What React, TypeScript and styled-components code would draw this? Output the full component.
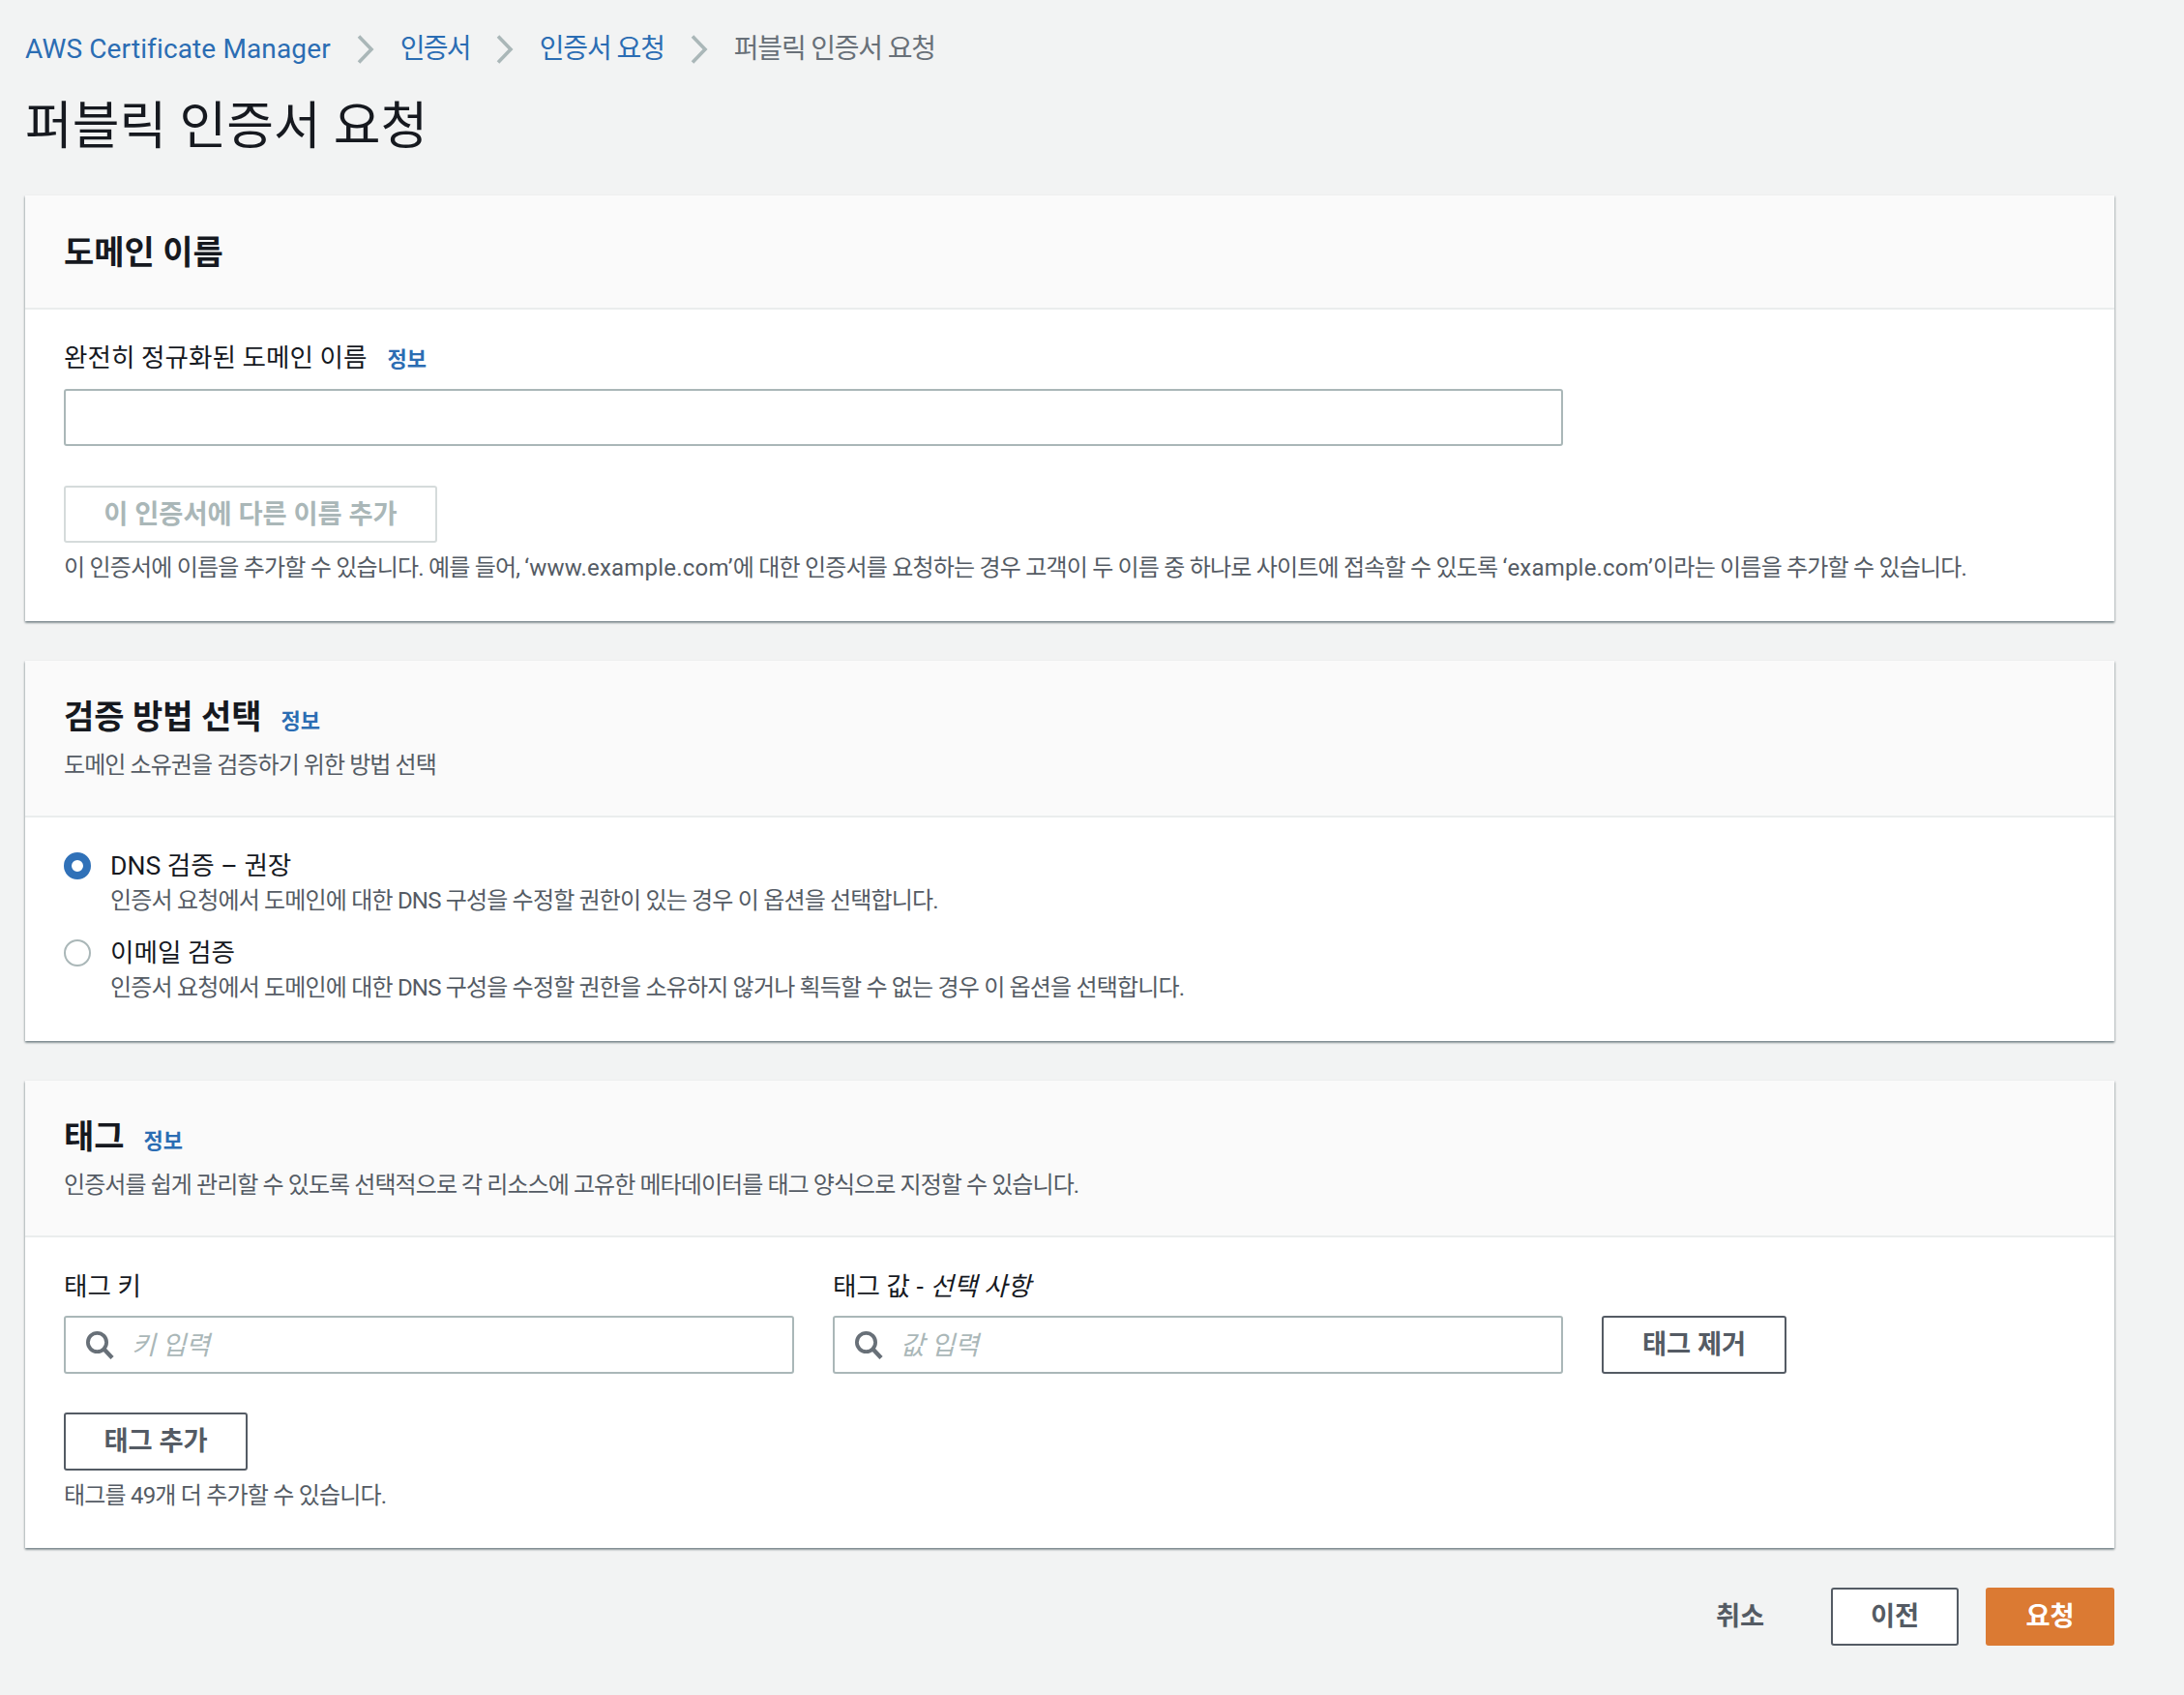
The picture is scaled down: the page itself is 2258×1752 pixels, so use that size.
import React from "react";
import styled, { createGlobalStyle } from "styled-components";

const FONT = `Roboto, "Noto Sans CJK KR", "Noto Sans", sans-serif`;

const Global = createGlobalStyle`
  html, body { margin: 0; padding: 0; background: #f2f3f3; }
  body { font-family: ${FONT}; color: #16191f; }
  * { box-sizing: border-box; }
`;

const Page = styled.div`
  width: 2258px;
  min-height: 1752px;
  padding: 33px 72px 51px 26px;
  background: #f2f3f3;
`;

const Breadcrumbs = styled.nav`
  display: flex;
  align-items: center;
  height: 36px;
  font-size: 28px;
  line-height: 36px;
`;

const Crumb = styled.a<{ $ls: number }>`
  color: #2b6db3;
  letter-spacing: ${(p) => p.$ls}px;
`;

const CurrentCrumb = styled.span`
  color: #687078;
  letter-spacing: -1.2px;
`;

const ChevronWrap = styled.svg`
  width: 18px;
  height: 30px;
  margin: 0 27px;
  flex: none;
`;

const Title = styled.h1`
  margin: 27px 0 36px;
  font-size: 53px;
  line-height: 70px;
  font-weight: 400;
  color: #16191f;
`;

const Panel = styled.section`
  background: #fff;
  margin-bottom: 41px;
  box-shadow: 0 2px 2px rgba(0, 28, 36, 0.35), 1px 1px 2px rgba(0, 28, 36, 0.15), -1px 1px 2px rgba(0, 28, 36, 0.15);
`;

const PanelHeader = styled.header<{ $pt?: number }>`
  min-height: 118px;
  padding: ${(p) => p.$pt ?? 38}px 40px 35px;
  background: #fafafa;
  border-bottom: 2px solid #eaeded;
`;

const HeaderRow = styled.div`
  display: flex;
  align-items: baseline;
  gap: 20px;
  height: 40px;
`;

const PanelTitle = styled.h2`
  margin: 0;
  font-size: 34px;
  line-height: 41px;
  font-weight: 700;
  color: #16191f;
`;

const InfoLink = styled.a`
  font-size: 22px;
  font-weight: 700;
  color: #2b6db3;
`;

const Subtitle = styled.p`
  margin: 13px 0 0;
  font-size: 24px;
  line-height: 34px;
  color: #545b64;
  letter-spacing: -0.92px;
`;

const PanelBody = styled.div<{ $pt: number; $pb: number }>`
  padding: ${(p) => p.$pt}px 40px ${(p) => p.$pb}px;
`;

const LabelRow = styled.div`
  display: flex;
  align-items: baseline;
  gap: 21px;
  height: 34px;
`;

const Label = styled.label`
  display: block;
  font-size: 26.6px;
  line-height: 34px;
  color: #16191f;
`;

const TextInput = styled.input`
  display: block;
  width: 1550px;
  height: 59px;
  margin-top: 15px;
  border: 2px solid #aab7b8;
  border-radius: 3px;
  background: #fff;
`;

const Button = styled.button<{ $w: number; $h?: number; $disabled?: boolean }>`
  display: block;
  width: ${(p) => p.$w}px;
  height: ${(p) => p.$h ?? 60}px;
  padding: 0;
  font-family: ${FONT};
  font-size: 27.3px;
  font-weight: 700;
  line-height: 34px;
  background: #fff;
  border: 2px solid ${(p) => (p.$disabled ? "#d5dbdb" : "#545b64")};
  color: ${(p) => (p.$disabled ? "#aab7b8" : "#545b64")};
  border-radius: 3px;
  flex: none;
`;

const AddNameRow = styled.div`
  margin-top: 41px;
`;

const Hint = styled.p<{ $mt: number }>`
  margin: ${(p) => p.$mt}px 0 0;
  font-size: 24px;
  line-height: 34px;
  color: #545b64;
  letter-spacing: -0.8px;
`;

const LatinRun = styled.span`
  letter-spacing: 0.2px;
`;

const RadioGroup = styled.div`
  display: flex;
  flex-direction: column;
  gap: 19px;
`;

const RadioRow = styled.div`
  display: grid;
  grid-template-columns: 28px 1fr;
  column-gap: 20px;
`;

const RadioDot = styled.span<{ $on?: boolean }>`
  width: 28px;
  height: 28px;
  margin-top: 4px;
  border-radius: 50%;
  background: #fff;
  border: ${(p) => (p.$on ? "8.7px solid #3071b8" : "2px solid #aab7b8")};
`;

const RadioText = styled.div`
  display: flex;
  flex-direction: column;
`;

const RadioLabel = styled.span`
  font-size: 26.6px;
  line-height: 36px;
  color: #16191f;
`;

const RadioDesc = styled.span`
  font-size: 24px;
  line-height: 34px;
  color: #545b64;
  margin-top: 1px;
  letter-spacing: -0.82px;
`;

const TagRow = styled.div`
  display: flex;
  align-items: flex-end;
  gap: 40px;
`;

const TagField = styled.div<{ $w: number }>`
  width: ${(p) => p.$w}px;
  flex: none;
`;

const SearchBox = styled.div`
  display: flex;
  align-items: center;
  height: 60px;
  margin-top: 13px;
  padding: 0 20px;
  gap: 18px;
  border: 2px solid #aab7b8;
  border-radius: 3px;
  background: #fff;
`;

const SearchInput = styled.input`
  flex: 1;
  min-width: 0;
  height: 34px;
  border: 0;
  outline: 0;
  padding: 1px 0 0;
  font-family: ${FONT};
  font-size: 27px;
  font-style: italic;
  background: transparent;
  &::placeholder {
    color: #aab7b8;
    opacity: 1;
  }
`;

const SearchIcon = styled.svg`
  width: 30px;
  height: 30px;
  flex: none;
`;

const AddTagRow = styled.div`
  margin-top: 40px;
`;

const Footer = styled.footer`
  display: flex;
  justify-content: flex-end;
  align-items: center;
  gap: 28px;
`;

const CancelButton = styled.button`
  width: 132px;
  height: 60px;
  padding: 0;
  border: 0;
  background: transparent;
  font-family: ${FONT};
  font-size: 27.3px;
  font-weight: 700;
  line-height: 34px;
  color: #545b64;
`;

const PrimaryButton = styled.button`
  width: 133px;
  height: 60px;
  padding: 0;
  border: 0;
  border-radius: 3px;
  background: #db7a33;
  font-family: ${FONT};
  font-size: 27.3px;
  font-weight: 700;
  line-height: 34px;
  color: #fff;
`;

const Chevron = () => (
  <ChevronWrap viewBox="0 0 18 30" fill="none" stroke="#aab7b8" strokeWidth="3.6">
    <path d="M2 1.5 L15 15 L2 28.5" />
  </ChevronWrap>
);

const Search = () => (
  <SearchIcon viewBox="0 0 30 30" fill="none" stroke="#687078" strokeWidth="3.8">
    <circle cx="12.5" cy="12.5" r="9.6" />
    <path d="M19.5 19.5 L28 28.5" strokeWidth="4.4" />
  </SearchIcon>
);

export default function App() {
  return (
    <Page>
      <Global />
      <Breadcrumbs>
        <Crumb $ls={0.13}>AWS Certificate Manager</Crumb>
        <Chevron />
        <Crumb $ls={-1.8}>인증서</Crumb>
        <Chevron />
        <Crumb $ls={-1.1}>인증서 요청</Crumb>
        <Chevron />
        <CurrentCrumb>퍼블릭 인증서 요청</CurrentCrumb>
      </Breadcrumbs>
      <Title>퍼블릭 인증서 요청</Title>

      <Panel>
        <PanelHeader $pt={39}>
          <PanelTitle>도메인 이름</PanelTitle>
        </PanelHeader>
        <PanelBody $pt={33} $pb={38}>
          <LabelRow>
            <Label>완전히 정규화된 도메인 이름</Label>
            <InfoLink>정보</InfoLink>
          </LabelRow>
          <TextInput />
          <AddNameRow>
            <Button $w={386} $h={59} $disabled>이 인증서에 다른 이름 추가</Button>
          </AddNameRow>
          <Hint $mt={9}>
            이 인증서에 이름을 추가할 수 있습니다. 예를 들어, <LatinRun>‘www.example.com’</LatinRun>에 대한 인증서를 요청하는 경우 고객이 두 이름 중 하나로 사이트에 접속할 수 있도록 <LatinRun>‘example.com’</LatinRun>이라는 이름을 추가할 수 있습니다.
          </Hint>
        </PanelBody>
      </Panel>

      <Panel>
        <PanelHeader>
          <HeaderRow>
            <PanelTitle>검증 방법 선택</PanelTitle>
            <InfoLink>정보</InfoLink>
          </HeaderRow>
          <Subtitle>도메인 소유권을 검증하기 위한 방법 선택</Subtitle>
        </PanelHeader>
        <PanelBody $pt={32} $pb={38}>
          <RadioGroup>
            <RadioRow>
              <RadioDot $on />
              <RadioText>
                <RadioLabel>DNS 검증 – 권장</RadioLabel>
                <RadioDesc>인증서 요청에서 도메인에 대한 DNS 구성을 수정할 권한이 있는 경우 이 옵션을 선택합니다.</RadioDesc>
              </RadioText>
            </RadioRow>
            <RadioRow>
              <RadioDot />
              <RadioText>
                <RadioLabel>이메일 검증</RadioLabel>
                <RadioDesc>인증서 요청에서 도메인에 대한 DNS 구성을 수정할 권한을 소유하지 않거나 획득할 수 없는 경우 이 옵션을 선택합니다.</RadioDesc>
              </RadioText>
            </RadioRow>
          </RadioGroup>
        </PanelBody>
      </Panel>

      <Panel>
        <PanelHeader>
          <HeaderRow>
            <PanelTitle>태그</PanelTitle>
            <InfoLink>정보</InfoLink>
          </HeaderRow>
          <Subtitle>인증서를 쉽게 관리할 수 있도록 선택적으로 각 리소스에 고유한 메타데이터를 태그 양식으로 지정할 수 있습니다.</Subtitle>
        </PanelHeader>
        <PanelBody $pt={34} $pb={37}>
          <TagRow>
            <TagField $w={755}>
              <Label>태그 키</Label>
              <SearchBox>
                <Search />
                <SearchInput placeholder="키 입력" />
              </SearchBox>
            </TagField>
            <TagField $w={755}>
              <Label>태그 값 - <em>선택 사항</em></Label>
              <SearchBox>
                <Search />
                <SearchInput placeholder="값 입력" />
              </SearchBox>
            </TagField>
            <Button $w={191}>태그 제거</Button>
          </TagRow>
          <AddTagRow>
            <Button $w={190}>태그 추가</Button>
          </AddTagRow>
          <Hint $mt={9}>태그를 49개 더 추가할 수 있습니다.</Hint>
        </PanelBody>
      </Panel>

      <Footer>
        <CancelButton>취소</CancelButton>
        <Button $w={132}>이전</Button>
        <PrimaryButton>요청</PrimaryButton>
      </Footer>
    </Page>
  );
}
